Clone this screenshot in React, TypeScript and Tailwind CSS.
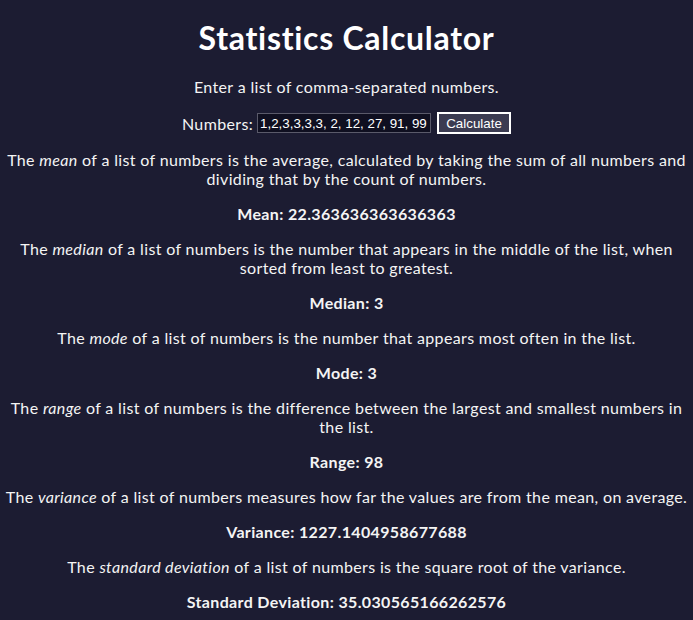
const sections = [
  {
    before: "The ",
    term: "mean",
    after:
      " of a list of numbers is the average, calculated by taking the sum of all numbers and dividing that by the count of numbers.",
    label: "Mean",
    value: "22.363636363636363",
  },
  {
    before: "The ",
    term: "median",
    after:
      " of a list of numbers is the number that appears in the middle of the list, when sorted from least to greatest.",
    label: "Median",
    value: "3",
  },
  {
    before: "The ",
    term: "mode",
    after: " of a list of numbers is the number that appears most often in the list.",
    label: "Mode",
    value: "3",
  },
  {
    before: "The ",
    term: "range",
    after:
      " of a list of numbers is the difference between the largest and smallest numbers in the list.",
    label: "Range",
    value: "98",
  },
  {
    before: "The ",
    term: "variance",
    after:
      " of a list of numbers measures how far the values are from the mean, on average.",
    label: "Variance",
    value: "1227.1404958677688",
  },
  {
    before: "The ",
    term: "standard deviation",
    after: " of a list of numbers is the square root of the variance.",
    label: "Standard Deviation",
    value: "35.030565166262576",
  },
];

export default function App() {
  return (
    <div className="min-h-[620px] bg-[#1c1c32] px-1 pb-2 text-center text-[16px] leading-[19px] tracking-[0.35px] text-[#f4f4f4] [font-family:'Lato','Open_Sans',sans-serif]">
      <h1 className="mb-[21px] pt-[19px] text-[32px] font-bold leading-[37px] tracking-[0.7px] text-white">
        Statistics Calculator
      </h1>
      <p className="mb-4">Enter a list of comma-separated numbers.</p>

      {/* Input row */}
      <div className="mb-4 flex items-center justify-center">
        <label className="mr-1">Numbers:</label>
        <input
          defaultValue="1,2,3,3,3,3, 2, 12, 27, 91, 99"
          className="h-[20px] w-[174px] border border-[#5a5a6a] bg-[#0f0f20] px-[2px] text-[13.33px] tracking-normal text-white [font-family:'Liberation_Sans',Arial,sans-serif]"
        />
        <button className="ml-[6px] h-[22px] w-[74px] border-2 border-white bg-[#3b3b51] text-[13.33px] tracking-normal text-white [font-family:'Liberation_Sans',Arial,sans-serif]">
          Calculate
        </button>
      </div>

      {sections.map((s) => (
        <div key={s.label}>
          <p className="mb-4">
            {s.before}
            <em>{s.term}</em>
            {s.after}
          </p>
          <p className="mb-4 font-bold">
            {s.label}: {s.value}
          </p>
        </div>
      ))}
    </div>
  );
}
